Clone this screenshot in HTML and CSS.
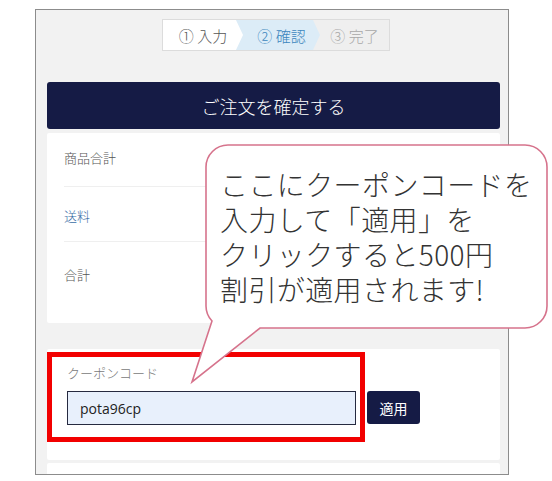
FILE: index.html
```html
<!DOCTYPE html>
<html lang="ja">
<head>
<meta charset="utf-8">
<title>ご注文確認</title>
<link rel="stylesheet" href="styles.css">
</head>
<body>
<div class="stage">
  <div class="frame">
    <div class="steps">
      <div class="step step1">① 入力</div>
      <div class="step step2">② 確認</div>
      <div class="step step3">③ 完了</div>
    </div>
    <div class="confirm">ご注文を確定する</div>
    <div class="card summary">
      <div class="row row1"><span class="label">商品合計</span></div>
      <div class="row row2"><span class="label link">送料</span></div>
      <div class="row row3"><span class="label">合計</span></div>
    </div>
    <div class="card coupon">
      <div class="coupon-label">クーポンコード</div>
      <div class="coupon-form">
        <div class="coupon-input">pota96cp</div>
        <div class="apply">適用</div>
      </div>
    </div>
    <div class="card next"></div>
  </div>

  <div class="redbox"></div>

  <svg class="bubble" width="367" height="250" viewBox="0 0 367 250" xmlns="http://www.w3.org/2000/svg">
    <path d="M43,5 H340 A22,22 0 0 1 362,27 V166 A22,22 0 0 1 340,188 H75 L7,242 L27,181 A22,22 0 0 1 21,166 V27 A22,22 0 0 1 43,5 Z" fill="#fff" stroke="#d6738c" stroke-width="1.6"/>
  </svg>
  <div class="bubble-text">
    <div class="bline">ここにクーポンコードを</div>
    <div class="bline">入力して「適用」を</div>
    <div class="bline">クリックすると500円</div>
    <div class="bline">割引が適用されます!</div>
  </div>
</div>
</body>
</html>
```
FILE: styles.css
```css
* { box-sizing: border-box; }
html, body {
  margin: 0;
  padding: 0;
  background: #fff;
  font-family: "Noto Sans CJK JP", "Noto Sans", sans-serif;
}
.stage {
  position: relative;
  width: 552px;
  height: 481px;
  overflow: hidden;
}
.frame {
  margin: 9px 0 0 35px;
  width: 474px;
  height: 466px;
  border: 1px solid #8c8c8c;
  background: #f2f2f2;
  overflow: hidden;
  padding: 9px 8px 0 11px;
}
.steps {
  display: flex;
  width: 228px;
  height: 32px;
  margin-left: 115px;
  border: 1px solid #dcdcdc;
  background: #efefef;
}
.step {
  position: relative;
  display: flex;
  align-items: center;
  justify-content: center;
  font-size: 15px;
  line-height: 1;
  height: 100%;
  font-weight: 300;
}
.step1 {
  width: 80px;
  background: #fff;
  color: #555;
  z-index: 2;
  clip-path: polygon(0 0, 73px 0, 80px 50%, 73px 100%, 0 100%);
}
.step2 {
  width: 84px;
  margin-left: -7px;
  padding-left: 7px;
  background: #dcecf7;
  color: #3d86bd;
  z-index: 1;
  clip-path: polygon(0 0, 77px 0, 84px 50%, 77px 100%, 0 100%);
}
.step3 {
  flex: 1;
  margin-left: -7px;
  padding-left: 7px;
  color: #a8a8a8;
}
.confirm {
  margin-top: 31px;
  height: 47px;
  background: #151b45;
  border-radius: 3px;
  color: #fff;
  font-size: 18px;
  font-weight: 300;
  display: flex;
  align-items: center;
  justify-content: center;
}
.card {
  background: #fff;
  border-radius: 2px;
}
.summary {
  margin-top: 4px;
  height: 190px;
  padding: 0 17px;
}
.row {
  border-bottom: 1px solid #efefef;
}
.row1 { height: 54px; padding-top: 16px; }
.row2 { height: 55px; padding-top: 20px; }
.row3 { height: 80px; padding-top: 24px; border-bottom: none; }
.label {
  display: block;
  font-size: 13px;
  line-height: 18px;
  color: #555;
  font-weight: 300;
}
.label.link { color: #3b6ea6; }
.coupon {
  margin-top: 26px;
  height: 111px;
  padding: 15px 20px 0;
}
.coupon-label {
  font-size: 13px;
  line-height: 18px;
  color: #7a7a7a;
  font-weight: 300;
}
.coupon-form {
  display: flex;
  align-items: flex-start;
  margin-top: 9px;
}
.coupon-input {
  width: 289px;
  height: 34px;
  background: #e8f0fc;
  border: 1px solid #262a40;
  padding-left: 12px;
  font-family: "Open Sans", "Noto Sans", sans-serif;
  font-size: 14px;
  color: #222;
  display: flex;
  align-items: center;
}
.apply {
  margin-left: 11px;
  width: 53px;
  height: 33px;
  background: #151b45;
  border-radius: 3px;
  color: #fff;
  font-size: 14px;
  display: flex;
  align-items: center;
  justify-content: center;
}
.next {
  margin-top: 3px;
  height: 40px;
}
.redbox {
  position: absolute;
  left: 47px;
  top: 352px;
  width: 318px;
  height: 90px;
  border: 5px solid #f20000;
}
.bubble {
  position: absolute;
  left: 185px;
  top: 140px;
}
.bubble-text {
  position: absolute;
  left: 220px;
  top: 167px;
  color: #333;
  white-space: nowrap;
}
.bline {
  height: 35px;
  font-size: 28px;
  line-height: 35px;
  letter-spacing: 0.4px;
  font-weight: 300;
}
```
